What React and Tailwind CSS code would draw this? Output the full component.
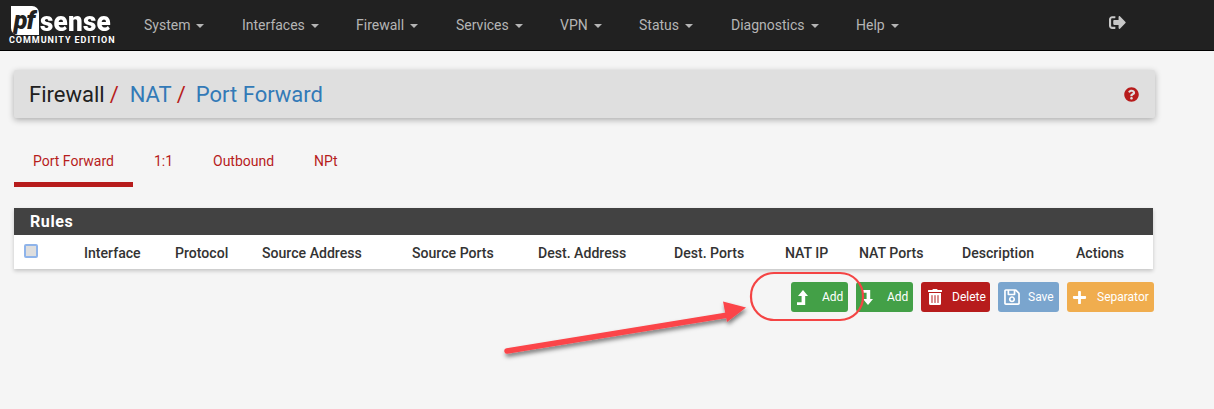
import React from "react";
import { FaTrashAlt, FaRegSave, FaPlus, FaQuestionCircle, FaSignOutAlt } from "react-icons/fa";

const nav = ["System", "Interfaces", "Firewall", "Services", "VPN", "Status", "Diagnostics", "Help"];
const navGaps = ["w-[98px]", "w-[114px]", "w-[100px]", "w-[104px]", "w-[79px]", "w-[92px]", "w-[125px]", "w-auto"];
const cols = [
  ["Interface", "w-[91px]"],
  ["Protocol", "w-[87px]"],
  ["Source Address", "w-[150px]"],
  ["Source Ports", "w-[126px]"],
  ["Dest. Address", "w-[136px]"],
  ["Dest. Ports", "w-[111px]"],
  ["NAT IP", "w-[74px]"],
  ["NAT Ports", "w-[103px]"],
  ["Description", "w-[114px]"],
  ["Actions", "w-[60px]"],
];

function LevelUp() {
  return (
    <svg className="ml-[6px]" width="11" height="15" viewBox="0 0 11 15" fill="currentColor">
      <polygon points="6,0 11,6 8.2,6 8.2,15 0,15 0,12.2 4.6,12.2 4.6,6 1,6" />
    </svg>
  );
}

function LevelDown() {
  return (
    <svg className="ml-[6px]" width="11" height="15" viewBox="0 0 11 15" fill="currentColor">
      <polygon points="6,15 11,9 8.2,9 8.2,0 0,0 0,2.8 4.6,2.8 4.6,9 1,9" />
    </svg>
  );
}

function Btn({ color, icon, label, width, gap }) {
  return (
    <button className={`flex items-center h-[30px] rounded-[3px] text-white text-[12px] ${color} ${width}`}>
      {icon}
      <span className={gap}>{label}</span>
    </button>
  );
}

export default function App() {
  return (
    <div className="relative w-[1214px] h-[409px] overflow-hidden bg-[#f5f5f5] font-['Roboto',sans-serif]">
      <header className="h-[51px] bg-[#212121] border-b border-black flex items-center">
        <div className="w-[144px] pl-[9px] shrink-0">
          <div className="flex items-end h-[29px] pl-[2px]">
            <div className="w-[28px] h-[29px] bg-white overflow-hidden flex items-center justify-center rounded-tr-[7px] rounded-bl-[7px]">
              <span className="text-[#212121] text-[25px] leading-none italic font-black tracking-[-1px] pr-[2px] pt-[1px]">pf</span>
            </div>
            <span className="text-white text-[26px] leading-[23px] font-black tracking-[0.25px] ml-[1px] mb-[1px] scale-y-105 origin-bottom">sense</span>
          </div>
          <div className="text-white text-[9px] leading-[10px] font-bold tracking-[0.95px] whitespace-nowrap">COMMUNITY EDITION</div>
        </div>
        <nav className="flex items-center">
          {nav.map((n, i) => (
            <div key={n} className={`flex items-center text-[14px] text-[#b5b5b5] ${navGaps[i]}`}>
              {n}
              <span className="ml-[6px] mt-[1px] w-0 h-0 border-x-[4px] border-x-transparent border-t-[4px] border-t-[#b5b5b5]" />
            </div>
          ))}
        </nav>
        <div className="ml-auto mr-[88px] mb-[6px] text-[#c8c8c8] text-[17px]">
          <FaSignOutAlt />
        </div>
      </header>

      <main className="pl-[14px] w-[1155px] pt-[19px]">
        <div className="h-[48px] bg-[#dfdfdf] rounded-[2px] shadow-[0_2px_6px_rgba(0,0,0,0.3)] flex items-center pl-[15px] pr-[16px] text-[22px] leading-none">
          <span className="text-[#212121] pt-[1px]">Firewall</span>
          <span className="text-[#b71c1c] ml-[5px] mr-[11px] pt-[1px]">/</span>
          <span className="text-[#337ab7] pt-[1px]">NAT</span>
          <span className="text-[#b71c1c] ml-[5px] mr-[10px] pt-[1px]">/</span>
          <span className="text-[#337ab7] pt-[1px]">Port Forward</span>
          <FaQuestionCircle className="ml-auto text-[#b71c1c] text-[15px]" />
        </div>

        <div className="flex mt-[21px] h-[48px] text-[14px] text-[#b71c1c]">
          <div className="w-[119px] pl-[19px] pt-[12px] border-b-[5px] border-[#b71c1c] box-border">Port Forward</div>
          <div className="w-[59px] pl-[21px] pt-[12px]">1:1</div>
          <div className="w-[102px] pl-[21px] pt-[12px]">Outbound</div>
          <div className="pl-[20px] pt-[12px]">NPt</div>
        </div>

        <section className="mt-[21px] w-[1139px] bg-white shadow-[0_2px_4px_rgba(0,0,0,0.2)]">
          <div className="h-[27px] bg-[#424242] text-white text-[16px] font-bold tracking-[0.6px] pl-[16px] flex items-center pt-[1px]">Rules</div>
          <div className="h-[34px] flex items-center pt-[3px] text-[14.1px] font-medium text-[#333333]">
            <div className="w-[70px] pl-[10px] shrink-0 mb-[5px]">
              <div className="w-[14px] h-[14px] rounded-[2px] bg-[#dedede] border-2 border-[#8fb4ea]" />
            </div>
            {cols.map(([c, w]) => (
              <div key={c} className={`shrink-0 whitespace-nowrap ${w}`}>{c}</div>
            ))}
          </div>
        </section>

        <div className="flex justify-end gap-[8px] mt-[13px] w-[1140px]">
          <Btn color="bg-[#43a047]" width="w-[57px]" gap="ml-[14px]" icon={<LevelUp />} label="Add" />
          <Btn color="bg-[#43a047]" width="w-[57px]" gap="ml-[14px]" icon={<LevelDown />} label="Add" />
          <Btn color="bg-[#b71c1c]" width="w-[69px]" gap="ml-[9px]" icon={<FaTrashAlt className="ml-[6px] text-[16px]" />} label="Delete" />
          <Btn color="bg-[#7aa5ce]" width="w-[61px]" gap="ml-[7px]" icon={<FaRegSave className="ml-[5px] text-[18px]" />} label="Save" />
          <Btn color="bg-[#f0ad4e]" width="w-[87px]" gap="ml-[10px]" icon={<FaPlus className="ml-[5px] text-[15px]" />} label="Separator" />
        </div>
      </main>

      <svg className="absolute left-0 top-0 pointer-events-none" width="1214" height="409" viewBox="0 0 1214 409" fill="none">
        <defs>
          <filter id="sh" x="-10%" y="-50%" width="120%" height="200%">
            <feDropShadow dx="1" dy="3" stdDeviation="2" floodColor="#000" floodOpacity="0.5" />
          </filter>
        </defs>
        <rect x="751" y="273" width="112" height="47" rx="23" stroke="#f44444" strokeWidth="2.2" />
        <g filter="url(#sh)">
          <path d="M507 351 L725 315.5" stroke="#fb4449" strokeWidth="5.5" strokeLinecap="round" />
          <path d="M723 301.5 L746 307.5 L727 322 Z" fill="#fb4449" />
        </g>
      </svg>
    </div>
  );
}
